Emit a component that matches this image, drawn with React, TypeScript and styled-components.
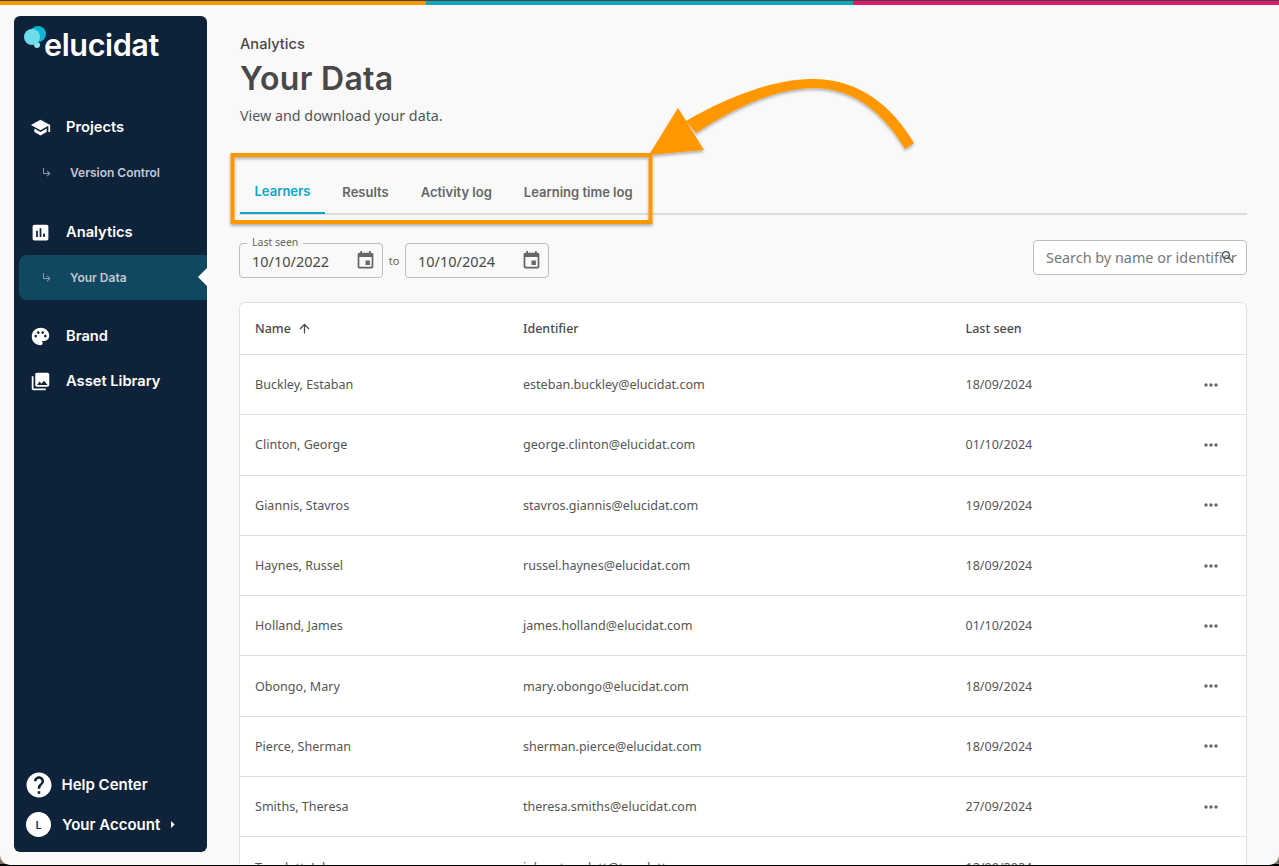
import React from "react";
import styled, { createGlobalStyle } from "styled-components";
import {
  MdAssessment,
  MdEvent,
  MdHelp,
  MdMoreHoriz,
  MdPalette,
  MdPhotoLibrary,
  MdSchool,
  MdSearch,
  MdArrowRight,
  MdArrowUpward,
  MdSubdirectoryArrowRight,
} from "react-icons/md";

const GlobalStyle = createGlobalStyle`
  html, body {
    margin: 0;
    padding: 0;
    height: 866px;
    overflow: hidden;
    background: linear-gradient(#7d7468 0 864.5px, #000 864.5px);
  }
  * {
    box-sizing: border-box;
  }
`;

const Frame = styled.div`
  position: relative;
  width: 1279px;
  height: 865px;
  background: #f9f9f9;
  border-radius: 0 0 10px 10px;
  overflow: hidden;
  font-family: "Noto Sans", "Open Sans", sans-serif;
`;

const TopBar = styled.div`
  display: flex;
  height: 5px;
  border-top: 1.5px solid #444;
`;

const TopSegment = styled.div<{ $color: string }>`
  flex: 1;
  background: ${(p) => p.$color};
`;

const Body = styled.div`
  display: flex;
  height: 860px;
  padding: 11px 32px 0 14px;
  gap: 32px;
`;

const Sidebar = styled.aside`
  width: 193px;
  height: 836px;
  flex: none;
  background: #0e2239;
  border-radius: 6px;
  display: flex;
  flex-direction: column;
  padding: 10px 0 15px 0;
  color: #fff;
  font-family: "Inter", sans-serif;
`;

const Logo = styled.div`
  position: relative;
  height: 38px;
  padding-left: 30px;
  font-size: 30.6px;
  line-height: 38px;
  font-weight: 600;
  letter-spacing: -0.4px;
`;

const LogoDots = styled.svg`
  position: absolute;
  left: 9px;
  top: 0;
`;

const Nav = styled.nav`
  display: flex;
  flex-direction: column;
  margin-top: 40.5px;
  flex: 1;
`;

const NavItem = styled.div<{ $gapAbove?: number }>`
  display: flex;
  align-items: center;
  height: 45px;
  padding-left: 15px;
  font-size: 14.7px;
  font-weight: 600;
  margin-top: ${(p) => p.$gapAbove ?? 0}px;
`;

const NavIcon = styled.span`
  display: flex;
  width: 22px;
  justify-content: center;
  margin-right: 15px;
  font-size: 21px;
`;

const SubItem = styled.div<{ $active?: boolean }>`
  position: relative;
  display: flex;
  align-items: center;
  height: 45px;
  margin-left: 5px;
  padding-left: 22px;
  font-size: 12px;
  font-weight: 600;
  color: #c3c9d0;
  background: ${(p) => (p.$active ? "#114861" : "transparent")};
  border-radius: 8px 0 0 8px;
  ${(p) =>
    p.$active &&
    `&::after {
      content: "";
      position: absolute;
      right: 0;
      top: 13px;
      border: 9px solid transparent;
      border-left-width: 0;
      border-right-color: #fff;
    }`}
`;

const SubArrow = styled.span`
  display: flex;
  width: 29px;
  font-size: 12px;
  color: #8b97a6;
`;

const SideFooter = styled.div`
  display: flex;
  flex-direction: column;
  gap: 15px;
  padding-left: 12px;
`;

const FooterItem = styled.div`
  display: flex;
  align-items: center;
  height: 25px;
  font-size: 15px;
  font-weight: 600;
  gap: 11px;
`;

const HelpIcon = styled(MdHelp)`
  font-size: 30px;
  margin: 0 -3px -1px -2.5px;
  flex: none;
`;

const Avatar = styled.span`
  display: flex;
  width: 25px;
  height: 25px;
  border-radius: 50%;
  background: #fff;
  color: #0e2239;
  align-items: center;
  justify-content: center;
  font-size: 10px;
  font-weight: 600;
`;

const Caret = styled(MdArrowRight)`
  font-size: 17px;
  margin-left: -7px;
`;

const Main = styled.main`
  flex: 1;
  min-width: 0;
  padding-top: 18px;
`;

const Crumb = styled.div`
  padding-left: 1px;
  font-family: "Inter", sans-serif;
  font-size: 14.6px;
  line-height: 20px;
  font-weight: 500;
  color: #484848;
`;

const Title = styled.h1`
  margin: 5px 0 0;
  padding-left: 1px;
  font-family: "Inter", sans-serif;
  font-size: 32px;
  line-height: 40px;
  font-weight: 600;
  letter-spacing: 0.3px;
  color: #484848;
`;

const Subtitle = styled.p`
  margin: 7px 0 0;
  padding-left: 1px;
  font-size: 14.3px;
  line-height: 20px;
  color: #555;
`;

const Tabs = styled.div`
  display: flex;
  gap: 3px;
  margin-top: 44px;
  height: 45px;
  padding-left: 1px;
  border-bottom: 2px solid #ddd;
`;

const Tab = styled.div<{ $active?: boolean }>`
  display: flex;
  align-items: center;
  height: 44px;
  padding: 0 14.5px;
  font-family: "Inter", sans-serif;
  font-size: 13px;
  font-weight: 600;
  color: ${(p) => (p.$active ? "#0ea5c6" : "#666")};
  border-bottom: ${(p) => (p.$active ? "2px solid #0ea5c6" : "none")};
`;

const FilterRow = styled.div`
  display: flex;
  align-items: flex-start;
  justify-content: space-between;
  margin-top: 28px;
`;

const DateGroup = styled.div`
  display: flex;
  align-items: center;
`;

const DateField = styled.div`
  position: relative;
  display: flex;
  align-items: center;
  justify-content: space-between;
  width: 144px;
  height: 35px;
  padding: 0 6px 0 12px;
  border: 1px solid #bdbdbd;
  border-radius: 4px;
  font-size: 14.5px;
  color: #4a4a4a;
`;

const DateLegend = styled.span`
  position: absolute;
  left: 7px;
  top: -8px;
  min-width: 8px;
  padding: 0 5px;
  background: #f9f9f9;
  font-size: 10.5px;
  line-height: 13px;
  color: #666;
`;

const CalendarIcon = styled(MdEvent)`
  font-size: 21px;
  color: #666;
`;

const ToLabel = styled.span`
  width: 22px;
  text-align: center;
  font-size: 11px;
  color: #666;
`;

const SearchBox = styled.div`
  position: relative;
  width: 214px;
  height: 35px;
  margin-top: -3px;
  padding: 0 12px;
  display: flex;
  align-items: center;
  background: #fff;
  border: 1px solid #bdbdbd;
  border-radius: 4px;
  font-size: 14.4px;
  color: #777;
  white-space: nowrap;
  overflow: hidden;
`;

const SearchIcon = styled(MdSearch)`
  position: absolute;
  right: 11px;
  top: 8px;
  font-size: 15px;
  color: #555;
`;

const TableCard = styled.div`
  margin-top: 24px;
  background: #fff;
  border: 1px solid #e0e0e0;
  border-radius: 6px 6px 0 0;
`;

const Row = styled.div<{ $head?: boolean }>`
  display: grid;
  grid-template-columns: 268px 442.5px 1fr 45px;
  align-items: center;
  height: ${(p) => (p.$head ? "52px" : "60.3px")};
  padding-left: 15px;
  border-bottom: 1px solid #e0e0e0;
  font-size: ${(p) => (p.$head ? "12.5px" : "12.55px")};
  font-weight: ${(p) => (p.$head ? 500 : 400)};
  color: ${(p) => (p.$head ? "#4a4a4a" : "#555")};
`;

const NameHead = styled.span`
  display: flex;
  align-items: center;
  gap: 6px;
`;

const MoreIcon = styled(MdMoreHoriz)`
  font-size: 20px;
  color: #666;
`;

const Annotation = styled.svg`
  position: absolute;
  left: 0;
  top: 0;
  pointer-events: none;
`;

const rows = [
  ["Buckley, Estaban", "esteban.buckley@elucidat.com", "18/09/2024"],
  ["Clinton, George", "george.clinton@elucidat.com", "01/10/2024"],
  ["Giannis, Stavros", "stavros.giannis@elucidat.com", "19/09/2024"],
  ["Haynes, Russel", "russel.haynes@elucidat.com", "18/09/2024"],
  ["Holland, James", "james.holland@elucidat.com", "01/10/2024"],
  ["Obongo, Mary", "mary.obongo@elucidat.com", "18/09/2024"],
  ["Pierce, Sherman", "sherman.pierce@elucidat.com", "18/09/2024"],
  ["Smiths, Theresa", "theresa.smiths@elucidat.com", "27/09/2024"],
  ["Tremlett, Johan", "johan.tremlett@tremlett.com", "12/09/2024"],
];

const App = () => {
  return (
    <Frame>
      <GlobalStyle />
      <TopBar>
        <TopSegment $color="#ff9800" />
        <TopSegment $color="#0ea5c0" />
        <TopSegment $color="#e0196a" />
      </TopBar>
      <Body>
        <Sidebar>
          <Logo>
            <LogoDots width="26" height="26" viewBox="0 0 26 26">
              <circle cx="14" cy="19" r="3" fill="#8ee3ef" />
              <circle cx="15" cy="8" r="8" fill="#0fb5d3" />
              <circle cx="9" cy="11" r="8" fill="#6fdcea" />
            </LogoDots>
            elucidat
          </Logo>
          <Nav>
            <NavItem>
              <NavIcon>
                <MdSchool />
              </NavIcon>
              Projects
            </NavItem>
            <SubItem>
              <SubArrow>
                <MdSubdirectoryArrowRight />
              </SubArrow>
              Version Control
            </SubItem>
            <NavItem $gapAbove={15}>
              <NavIcon>
                <MdAssessment />
              </NavIcon>
              Analytics
            </NavItem>
            <SubItem $active>
              <SubArrow>
                <MdSubdirectoryArrowRight />
              </SubArrow>
              Your Data
            </SubItem>
            <NavItem $gapAbove={14}>
              <NavIcon>
                <MdPalette />
              </NavIcon>
              Brand
            </NavItem>
            <NavItem>
              <NavIcon>
                <MdPhotoLibrary />
              </NavIcon>
              Asset Library
            </NavItem>
          </Nav>
          <SideFooter>
            <FooterItem>
              <HelpIcon />
              Help Center
            </FooterItem>
            <FooterItem>
              <Avatar>L</Avatar>
              Your Account
              <Caret />
            </FooterItem>
          </SideFooter>
        </Sidebar>
        <Main>
          <Crumb>Analytics</Crumb>
          <Title>Your Data</Title>
          <Subtitle>View and download your data.</Subtitle>
          <Tabs>
            <Tab $active>Learners</Tab>
            <Tab>Results</Tab>
            <Tab>Activity log</Tab>
            <Tab>Learning time log</Tab>
          </Tabs>
          <FilterRow>
            <DateGroup>
              <DateField>
                <DateLegend>Last seen</DateLegend>
                10/10/2022
                <CalendarIcon />
              </DateField>
              <ToLabel>to</ToLabel>
              <DateField>
                <DateLegend />
                10/10/2024
                <CalendarIcon />
              </DateField>
            </DateGroup>
            <SearchBox>
              Search by name or identifier
              <SearchIcon />
            </SearchBox>
          </FilterRow>
          <TableCard>
            <Row $head>
              <NameHead>
                Name <MdArrowUpward size={15} />
              </NameHead>
              <span>Identifier</span>
              <span>Last seen</span>
              <span />
            </Row>
            {rows.map((r) => (
              <Row key={r[1]}>
                <span>{r[0]}</span>
                <span>{r[1]}</span>
                <span>{r[2]}</span>
                <MoreIcon />
              </Row>
            ))}
          </TableCard>
        </Main>
      </Body>
      <Annotation width="1279" height="866" viewBox="0 0 1279 866">
        <defs>
          <filter id="shade" x="-10%" y="-10%" width="120%" height="125%">
            <feDropShadow dx="0" dy="2" stdDeviation="1.5" floodColor="#000" floodOpacity="0.3" />
          </filter>
        </defs>
        <g filter="url(#shade)">
          <rect x="232.5" y="155" width="418" height="67" fill="none" stroke="#ff9800" strokeWidth="4" />
          <path
            d="M678 108 L704 150 L649 155 Z M686 121 C725 98 775 78 815 79 C860 80 892 106 914 143 L905 149 C885 115 855 88 814 88 C775 88 735 108 696 133 Z"
            fill="#ff9800"
          />
        </g>
      </Annotation>
    </Frame>
  );
};

export default App;
